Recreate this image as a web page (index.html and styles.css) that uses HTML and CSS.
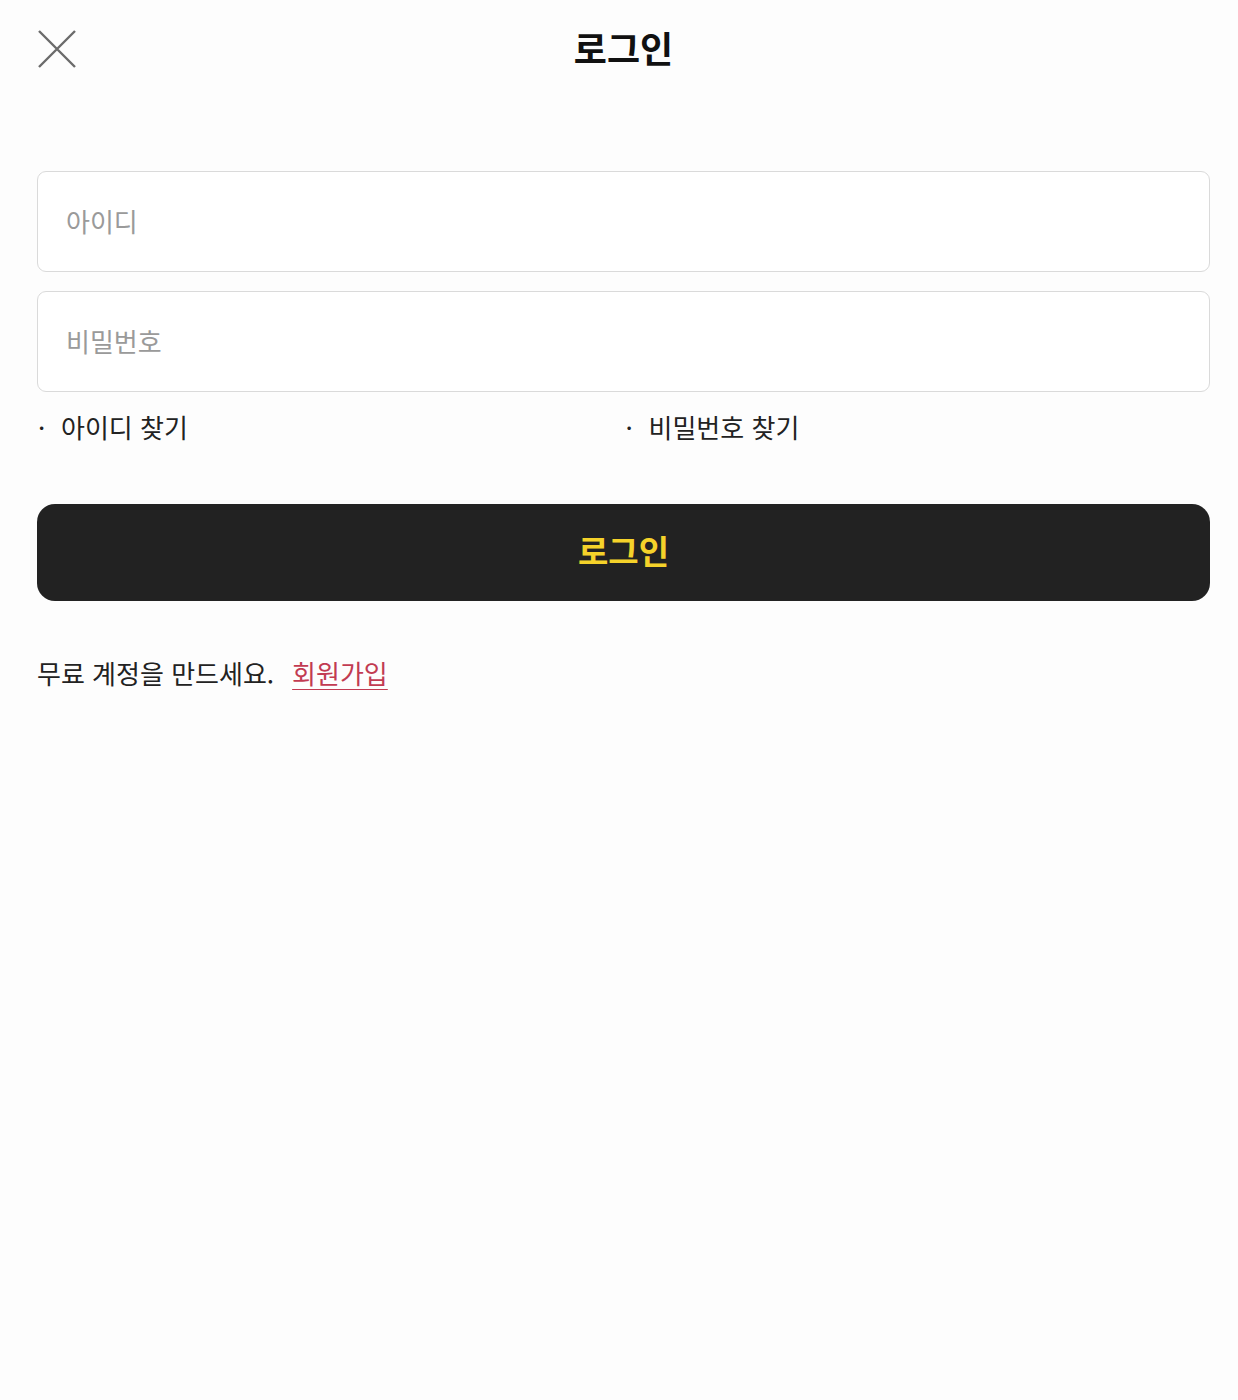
FILE: index.html
```html
<!DOCTYPE html>
<html lang="ko">
<head>
<meta charset="utf-8">
<title>로그인</title>
<link rel="stylesheet" href="styles.css">
</head>
<body>
<div class="page">
  <header class="header">
    <button class="close" aria-label="닫기">
      <svg width="38" height="38" viewBox="0 0 38 38"><path d="M1 1 L37 37 M37 1 L1 37" stroke="#6b6b6b" stroke-width="2.4" fill="none"/></svg>
    </button>
    <h1 class="title">로그인</h1>
    <span></span>
  </header>
  <form class="form">
    <input class="field" type="text" placeholder="아이디">
    <input class="field" type="password" placeholder="비밀번호">
    <div class="finds">
      <a class="find" href="#"><span class="dot">·</span>아이디 찾기</a>
      <a class="find" href="#"><span class="dot">·</span>비밀번호 찾기</a>
    </div>
    <button class="submit" type="button">로그인</button>
  </form>
  <p class="signup">무료 계정을 만드세요.<a class="signup-link" href="#">회원가입</a></p>
</div>
</body>
</html>
```
FILE: styles.css
```css
* { box-sizing: border-box; }
html, body { margin: 0; padding: 0; background: #fdfdfd; }
body { font-family: "Noto Sans CJK KR", "Noto Sans", sans-serif; color: #222; }
.page { padding: 0 28px 0 37px; }
.header {
  height: 94px;
  display: grid;
  grid-template-columns: 1fr auto 1fr;
  align-items: center;
}
.close {
  justify-self: start;
  background: none; border: 0; padding: 0; margin: 4px 0 0 1px;
  width: 38px; height: 38px; display: block; cursor: pointer;
}
.close svg { display: block; }
.title {
  margin: 0; font-size: 36px; font-weight: 700; line-height: 1; color: #111;
}
.form { margin-top: 77px; display: flex; flex-direction: column; }
.field {
  height: 101px; width: 100%;
  border: 1.5px solid #dadada; border-radius: 9px; background: #fff;
  padding: 0 28px 3px; font-family: inherit; font-size: 26px; color: #222;
  outline: none;
}
.field + .field { margin-top: 19px; }
.field::placeholder { color: #9a9a9a; }
.finds {
  margin-top: 17px; height: 36px;
  display: grid; grid-template-columns: 1fr 1fr; align-items: center;
}
.find { color: #222; text-decoration: none; font-size: 26px; line-height: 36px; }
.dot { display: inline-block; width: 24px; padding-left: 1px; }
.finds .find:last-child { padding-left: 1px; }
.submit {
  margin-top: 59px; height: 97px; width: 100%;
  background: #222; border: 0; border-radius: 18px;
  color: #f5d22a; font-family: inherit; font-size: 33px; font-weight: 700;
  padding: 0 0 5px; cursor: pointer;
}
.signup { margin: 54px 0 0; font-size: 26px; line-height: 36px; color: #222; }
.signup-link { margin-left: 18px; color: #c23b52; text-decoration: underline; text-underline-offset: 5px; text-decoration-thickness: 1px; }
```
